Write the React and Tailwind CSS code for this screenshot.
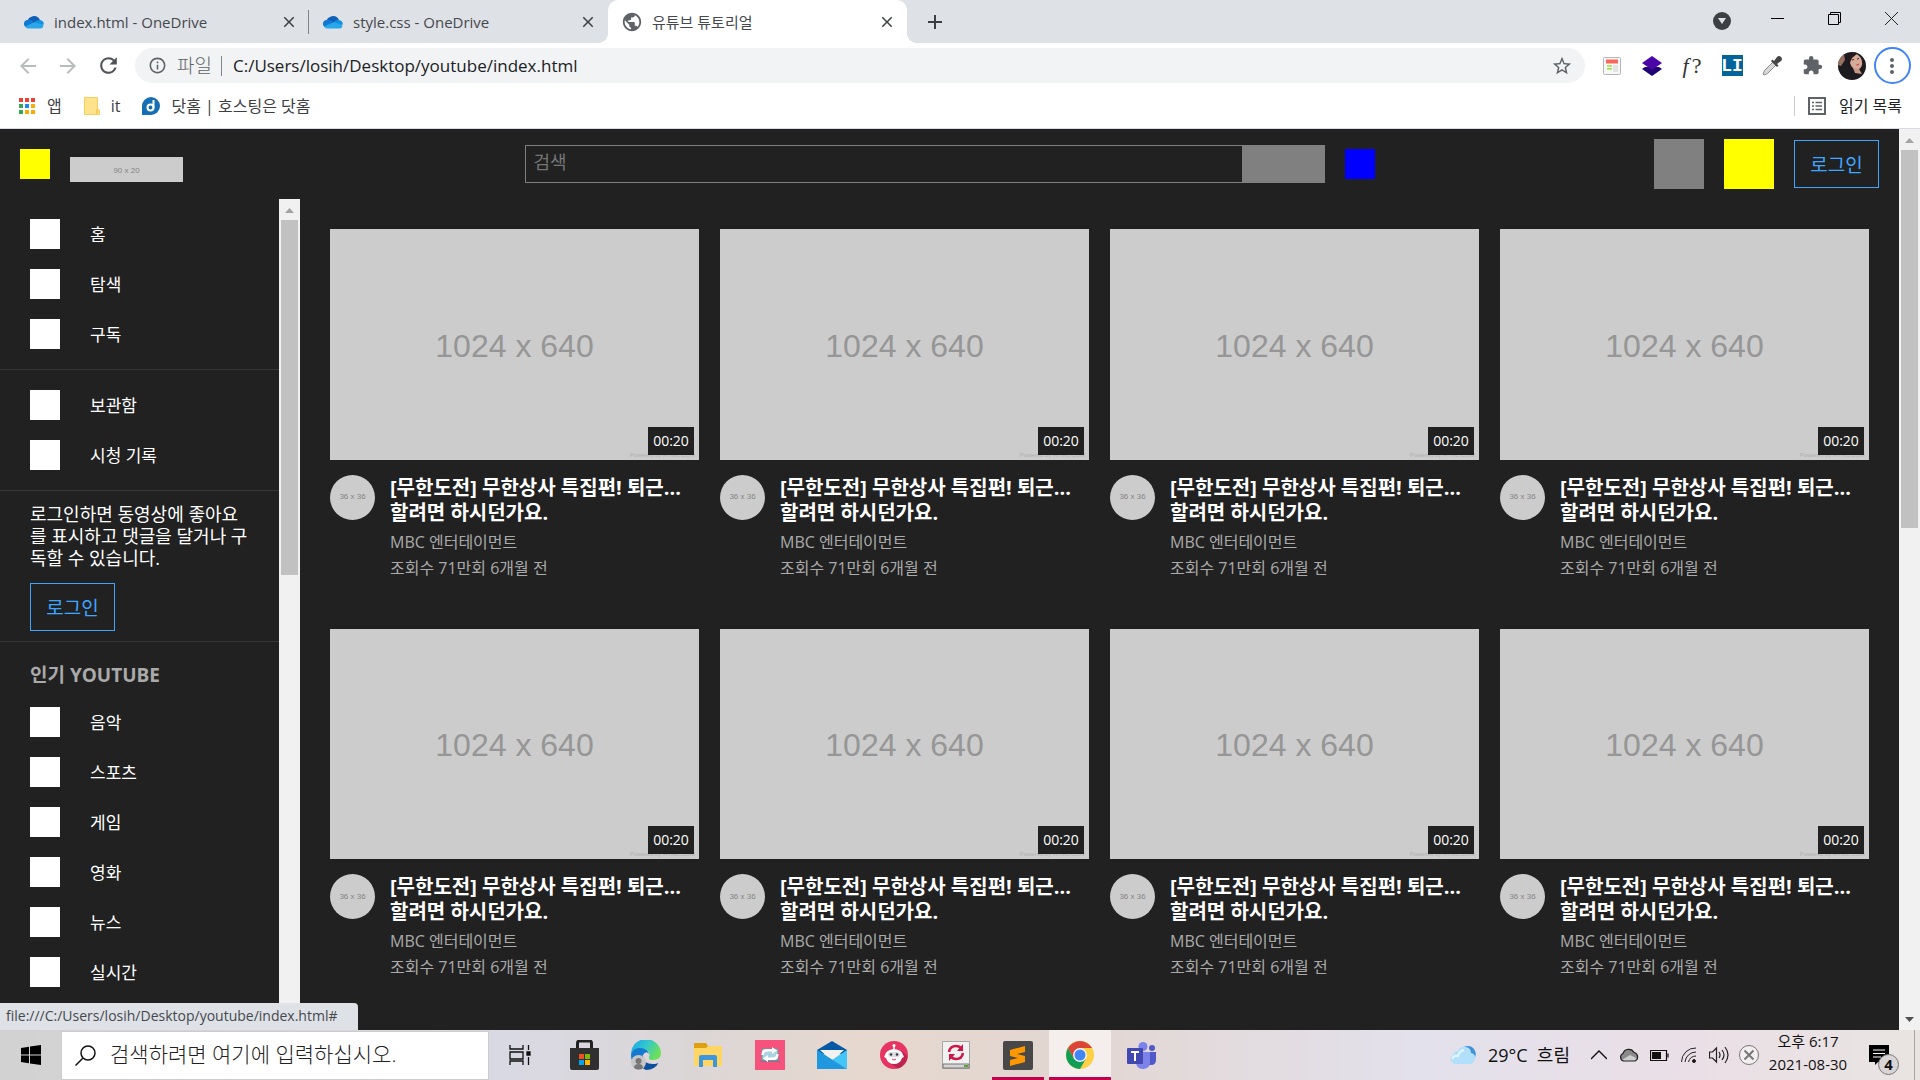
import React from 'react';
import {
  MdAdd,
  MdArrowBack,
  MdArrowForward,
  MdClose,
  MdExtension,
  MdInfoOutline,
  MdMoreVert,
  MdPublic,
  MdRefresh,
  MdStarBorder,
} from 'react-icons/md';

const menuMain = ['홈', '탐색', '구독'];
const menuLibrary = ['보관함', '시청 기록'];
const menuPopular = ['음악', '스포츠', '게임', '영화', '뉴스', '실시간'];
const videos = Array.from({ length: 8 }, (_, index) => ({
  id: index,
  title: ['[무한도전] 무한상사 특집편! 퇴근...', '할려면 하시던가요.'],
  channel: 'MBC 엔터테이먼트',
  meta: '조회수 71만회 6개월 전',
  time: '00:20',
}));

function OneDriveIcon() {
  return (
    <svg width="20" height="14" viewBox="0 0 20 14" aria-hidden="true">
      <path d="M4 9a5 5 0 0 1 3-7 6 6 0 0 1 9 3l-5 5z" fill="#0f5fb8" />
      <path d="M3.500 12.500A3.700 3.700 0 0 1 4 5q2-.5 4 .8L15 12z" fill="#1179d2" />
      <path d="M11 7a5 5 0 0 1 5-2 4 4 0 0 1 3.800 4.500L13 11z" fill="#1490df" />
      <path d="M1 11.500 11 7l8.500 3.500A3.300 3.300 0 0 1 16.500 13.500H4Q2 13.500 1 11.500z" fill="#28a8ea" />
    </svg>
  );
}

function Tab({ title, icon, active, divider }) {
  return (
    <div
      className={`relative flex h-full w-[299px] items-center pr-[11px] pl-[14px] ${
        active
          ? 'rounded-t-[10px] bg-white before:absolute before:bottom-0 before:-left-[10px] before:size-[10px] before:bg-[radial-gradient(circle_at_0_0,transparent_10px,white_10px)] after:absolute after:-right-[10px] after:bottom-0 after:size-[10px] after:bg-[radial-gradient(circle_at_100%_0,transparent_10px,white_10px)]'
          : ''
      }`}
    >
      <span className="flex w-5 shrink-0 justify-center">{icon}</span>
      <span className="ml-[10px] flex-1 truncate text-[15px] leading-5 text-[#45494d]">{title}</span>
      <button aria-label="탭 닫기" className="text-[#3c4043]">
        <MdClose size={18} />
      </button>
      {divider && <span className="absolute top-[10px] right-0 h-6 w-px bg-[#808387]" />}
    </div>
  );
}

function TabStrip() {
  return (
    <div className="flex h-[43px] shrink-0 bg-[#dee1e6] pl-[10px]">
      <Tab title="index.html - OneDrive" icon={<OneDriveIcon />} divider />
      <Tab title="style.css - OneDrive" icon={<OneDriveIcon />} />
      <Tab title="유튜브 튜토리얼" icon={<MdPublic size={22} className="shrink-0 text-[#5f6368]" />} active />
      <button aria-label="새 탭" className="ml-4 text-[#3c4043]">
        <MdAdd size={24} />
      </button>
      <div className="ml-auto flex h-9 items-center">
        <button aria-label="탭 검색" className="mt-[6px] mr-[18px] flex size-[18px] items-center justify-center rounded-full bg-[#3c4043]">
          <svg width="8" height="6" viewBox="0 0 8 6">
            <path d="M0 0h8L4 6z" fill="#dee1e6" />
          </svg>
        </button>
        <button aria-label="최소화" className="flex w-[57px] justify-center">
          <svg width="13" height="13" viewBox="0 0 13 13" stroke="#000">
            <path d="M0 6.500h13" />
          </svg>
        </button>
        <button aria-label="이전 크기로 복원" className="flex w-[57px] justify-center">
          <svg width="13" height="13" viewBox="0 0 13 13" fill="none" stroke="#000">
            <path d="M.5 2.500h10v10H.5zM2.500 2.500v-2h10v10h-2" />
          </svg>
        </button>
        <button aria-label="닫기" className="flex w-[57px] justify-center">
          <svg width="13" height="13" viewBox="0 0 13 13" stroke="#222">
            <path d="M0 0l13 13M13 0L0 13" />
          </svg>
        </button>
      </div>
    </div>
  );
}

function ToolButton({ label, children }) {
  return (
    <button aria-label={label} className="flex h-full w-10 shrink-0 items-center justify-center">
      {children}
    </button>
  );
}

function Toolbar() {
  return (
    <div className="flex h-[45px] shrink-0 items-center bg-white px-2">
      <ToolButton label="뒤로">
        <MdArrowBack size={24} className="text-[#babcbe]" />
      </ToolButton>
      <ToolButton label="앞으로">
        <MdArrowForward size={24} className="text-[#babcbe]" />
      </ToolButton>
      <ToolButton label="새로고침">
        <MdRefresh size={25} className="text-[#505357]" />
      </ToolButton>
      <div className="mx-[7px] flex h-[35px] flex-1 items-center rounded-full bg-[#f1f3f4] pr-3 pl-[13px]">
        <MdInfoOutline size={19} className="text-[#5f6368]" />
        <span className="ml-[10px] text-[19px] leading-6 font-light text-[#5f6368]">파일</span>
        <span className="mr-[11px] ml-[9px] h-5 w-px bg-[#80868b]" />
        <input
          aria-label="주소창"
          defaultValue="C:/Users/losih/Desktop/youtube/index.html"
          className="flex-1 bg-transparent text-[17px] text-[#202124] outline-none"
        />
        <button aria-label="북마크에 추가">
          <MdStarBorder size={22} className="text-[#5f6368]" />
        </button>
      </div>
      <ToolButton label="페이지 편집기">
        <svg width="18" height="18" viewBox="0 0 18 18">
          <rect x=".5" y=".5" width="17" height="17" rx="1" fill="#f7f7f7" stroke="#b5b5b5" />
          <path d="M3 2.500h12v4H3z" fill="#fa665c" />
          <path d="M4 8h5v1.800H4zM4 11h5v1.800H4z" fill="#a4e35c" />
          <path d="M10 8h5v7h-5z" fill="#e4e4e4" />
        </svg>
      </ToolButton>
      <ToolButton label="레이어">
        <svg width="20" height="20" viewBox="0 0 20 20">
          <path d="M0 13l3-2h14l3 2-10 7z" fill="#1f0473" />
          <path d="M10 0l10 7-10 7L0 7z" fill="#4b06a8" />
        </svg>
      </ToolButton>
      <ToolButton label="글꼴 확인">
        <span className="flex gap-[3px] font-['Liberation_Serif',serif] text-[22px] leading-6 text-[#333]">
          <i>f</i>
          <span>?</span>
        </span>
      </ToolButton>
      <ToolButton label="LI">
        <span className="flex size-[21px] items-center justify-center bg-[#03639b] font-['Liberation_Mono',monospace] text-lg leading-none font-bold text-white">
          LI
        </span>
      </ToolButton>
      <ToolButton label="색상 추출">
        <svg width="20" height="20" viewBox="0 0 20 20">
          <path d="M2 19l-1-1 1.500-3.500L11 6l3 3-8.500 8.500z" fill="#d8d8d8" stroke="#8a8a8a" />
          <path d="M9 5l1.500-1.500L12 5l3-4q2-2 4 0t0 4l-4 3 1.500 1.500L15 11z" fill="#444" />
        </svg>
      </ToolButton>
      <ToolButton label="확장 프로그램">
        <MdExtension size={21} className="text-[#5f6368]" />
      </ToolButton>
      <ToolButton label="프로필">
        <svg width="28" height="28" viewBox="0 0 28 28">
          <clipPath id="avatar">
            <circle cx="14" cy="14" r="14" />
          </clipPath>
          <g clipPath="url(#avatar)">
            <path d="M0 0h28v28H0z" fill="#1d1a20" />
            <path d="M0 7l6-5 1 6-4 6-3-1z" fill="#99705e" />
            <ellipse cx="18" cy="10" rx="6" ry="8" transform="rotate(-15 18 10)" fill="#d6aa98" />
            <path d="M15 16l6 1 3 5-7-1z" fill="#c59784" />
            <path d="M10 3q5-4 10-2l-6 5-3 7z" fill="#241a1d" />
            <path d="M14 8l2-.5M19 7l2-.5" stroke="#3a2525" />
            <path d="M17.500 13l4-1.500-1.500 2z" fill="#c5313f" />
          </g>
        </svg>
      </ToolButton>
      <ToolButton label="Chrome 맞춤설정">
        <span className="flex size-[37px] shrink-0 items-center justify-center rounded-full border-2 border-[#4285f4]">
          <MdMoreVert size={24} className="text-[#5f6368]" />
        </span>
      </ToolButton>
    </div>
  );
}

function BookmarkBar() {
  const dots = ['#ea4335', '#ea4335', '#ea4335', '#34a853', '#1a8cf0', '#fbab05', '#34a853', '#fbab05', '#fbab05'];
  return (
    <div className="flex h-[41px] shrink-0 items-center border-b border-[#d9dbdf] bg-white px-[18px] pb-[5px] text-base text-[#3c4043]">
      <a href="#" className="ml-px flex items-center gap-3">
        <span className="grid grid-cols-3 gap-[2px]">
          {dots.map((color, index) => (
            <span key={index} className="size-1" style={{ backgroundColor: color }} />
          ))}
        </span>
        앱
      </a>
      <a href="#" className="ml-[22px] flex items-center gap-[11px]">
        <svg width="16" height="18" viewBox="0 0 16 18">
          <path d="M.5.500h13v11l2 1.500v4.500H.5z" fill="#ffe38c" stroke="#f6cf5b" />
          <path d="M13 12v5" stroke="#e8b834" />
        </svg>
        it
      </a>
      <a href="#" className="ml-[22px] flex items-center gap-[11px]">
        <svg width="18" height="18" viewBox="0 0 18 18">
          <path d="M0 18V9a9 9 0 1 1 9 9z" fill="#166fb5" />
          <circle cx="8.500" cy="10.500" r="3" fill="none" stroke="#fff" strokeWidth="2" />
          <path d="M11.500 3v8" stroke="#fff" strokeWidth="2" />
        </svg>
        닷홈 | 호스팅은 닷홈
      </a>
      <a href="#" className="ml-auto flex items-center gap-[13px] text-[#202124]">
        <span className="h-5 w-px bg-[#c9cbce]" />
        <svg width="18" height="18" viewBox="0 0 18 18" fill="none" stroke="#5f6368">
          <path d="M1 1h16v16H1z" strokeWidth="2" />
          <path d="M4 5.500h2M4 9h2M4 12.500h2M7.500 5.500H14M7.500 9H14M7.500 12.500H14" strokeWidth="1.500" />
        </svg>
        읽기 목록
      </a>
    </div>
  );
}

function ScrollBar({ thumb }) {
  return (
    <div className="flex w-[21px] shrink-0 flex-col items-center bg-[#f1f1f1]">
      <svg width="21" height="21" viewBox="0 0 21 21" className="shrink-0">
        <path d="M6 14l4.500-5 4.500 5z" fill="#a3a3a3" />
      </svg>
      <div className="min-h-0 w-full flex-1 px-[2px]">
        <div className={`bg-[#c1c1c1] ${thumb}`} />
      </div>
      <svg width="21" height="21" viewBox="0 0 21 21" className="shrink-0">
        <path d="M6 8l4.500 5L15 8z" fill="#505050" />
      </svg>
    </div>
  );
}

function LoginButton() {
  return (
    <button className="h-12 w-[85px] shrink-0 border border-[#3ea6ff] pt-[2px] text-[19px] leading-none text-[#3ea6ff]">로그인</button>
  );
}

function PageHeader() {
  return (
    <header className="grid h-[70px] shrink-0 grid-cols-[1fr_auto_1fr] items-center px-5">
      <div className="flex items-center gap-5">
        <button aria-label="메뉴" className="h-[30px] w-[30px] bg-[#ffff00]" />
        <a href="#" className="mt-[10px] flex h-[25px] w-[113px] items-center justify-center bg-[#ccc] pt-1 font-['Liberation_Sans',sans-serif] text-[8px] text-[#858585]">
          90 x 20
        </a>
      </div>
      <form className="flex items-center" onSubmit={(e) => e.preventDefault()}>
        <input
          aria-label="검색"
          placeholder="검색"
          className="h-[38px] w-[718px] border border-[#808080] bg-transparent px-2 pb-1 text-[18px] text-white outline-none placeholder:text-[#757575]"
        />
        <button aria-label="검색하기" className="h-[38px] w-[82px] bg-[#808080]" />
        <button type="button" aria-label="음성 검색" className="ml-5 h-[30px] w-[30px] bg-[#0000ff]" />
      </form>
      <div className="flex items-center justify-end gap-5">
        <button aria-label="앱" className="size-[50px] bg-[#808080]" />
        <button aria-label="설정" className="size-[50px] bg-[#ffff00]" />
        <LoginButton />
      </div>
    </header>
  );
}

function MenuList({ items }) {
  return (
    <ul>
      {items.map((item) => (
        <li key={item}>
          <a href="#" className="flex h-[50px] items-center gap-[30px] px-[30px] text-[17px] text-white">
            <span className="size-[30px] bg-white" />
            <span className="pt-[2px]">{item}</span>
          </a>
        </li>
      ))}
    </ul>
  );
}

function Sidebar() {
  return (
    <aside className="flex w-[300px] shrink-0 overflow-hidden">
      <div className="min-w-0 flex-1 overflow-hidden">
        <nav className="border-b border-[#373737] py-[10px]">
          <MenuList items={menuMain} />
        </nav>
        <nav className="border-b border-[#373737] py-[10px]">
          <MenuList items={menuLibrary} />
        </nav>
        <section className="border-b border-[#373737] px-[30px] pt-3 pb-[10px]">
          <p className="mb-[14px] text-[18px] leading-[22px] whitespace-nowrap text-white">
            로그인하면 동영상에 좋아요
            <br />를 표시하고 댓글을 달거나 구
            <br />
            독할 수 있습니다.
          </p>
          <LoginButton />
        </section>
        <nav className="pt-5">
          <h2 className="mb-[9px] px-[30px] text-[19px] leading-[26px] font-bold text-[#aaa]">인기 YOUTUBE</h2>
          <MenuList items={menuPopular} />
        </nav>
      </div>
      <ScrollBar thumb="h-[45%]" />
    </aside>
  );
}

function VideoCard({ video }) {
  return (
    <article>
      <a href="#" className="relative flex aspect-[8/5] items-center justify-center bg-[#ccc] pt-[3px] font-['Liberation_Sans',sans-serif] text-[32px] text-[#969696]">
        1024 x 640
        <span className="absolute right-1 bottom-0 text-[6px] leading-[10px] text-[#b0b0b0]">Powered by HTML.COM</span>
        <time className="absolute right-[5px] bottom-[5px] h-7 w-[46px] bg-[#212121] text-center font-['Open_Sans',sans-serif] text-[14px] leading-7 text-white">
          {video.time}
        </time>
      </a>
      <div className="mt-[15px] flex gap-[15px]">
        <div className="flex size-[45px] shrink-0 items-center justify-center rounded-full bg-[#ccc] font-['Liberation_Sans',sans-serif] text-[8px] text-[#858585]">
          36 x 36
        </div>
        <div className="min-w-0 whitespace-nowrap">
          <h3 className="text-xl leading-[25px] font-bold text-white">
            {video.title[0]}
            <br />
            {video.title[1]}
          </h3>
          <p className="mt-1 text-base leading-[26px] text-[#aaa]">{video.channel}</p>
          <p className="text-base leading-[26px] text-[#aaa]">{video.meta}</p>
        </div>
      </div>
    </article>
  );
}

function TaskIcon({ label, className = '', children }) {
  return (
    <button aria-label={label} className={`relative flex h-full w-[62px] items-center justify-center ${className}`}>
      {children}
    </button>
  );
}

function TaskApps() {
  return (
    <div className="flex h-full">
      <TaskIcon label="작업 보기">
        <svg width="22" height="20" viewBox="0 0 22 20" fill="none" stroke="#111" strokeWidth="1.300">
          <path d="M1 0v4h13V0M1 20v-4h13v4M1 7h13v7H1zM19.500 0v5M19.500 12v8" />
          <path d="M18 7h3v3h-3z" fill="#111" />
        </svg>
      </TaskIcon>
      <TaskIcon label="Microsoft Store" className="ml-[2px]">
        <svg width="29" height="30" viewBox="0 0 29 30">
          <path d="M7.500 9V3q0-2 2-2h10q2 0 2 2v6" fill="none" stroke="#222" strokeWidth="3" />
          <path d="M0 8h29v20q0 2-2 2H2q-2 0-2-2z" fill="#303030" />
          <path d="M9 14h5v5H9z" fill="#f25022" />
          <path d="M15 14h5v5h-5z" fill="#7fba00" />
          <path d="M9 20h5v5H9z" fill="#00a4ef" />
          <path d="M15 20h5v5h-5z" fill="#ffb900" />
        </svg>
      </TaskIcon>
      <TaskIcon label="Microsoft Edge">
        <svg width="30" height="30" viewBox="0 0 30 30">
          <defs>
            <linearGradient id="edgeTop" x1="0" y1="0" x2="1" y2=".5">
              <stop offset="0" stopColor="#1ca0e8" />
              <stop offset=".5" stopColor="#32c6d2" />
              <stop offset="1" stopColor="#6be05a" />
            </linearGradient>
          </defs>
          <path d="M0 15A15 15 0 0 1 30 13q0 7-8 7-5 0-4-3 2-5-3-7Q5 7 0 15z" fill="url(#edgeTop)" />
          <path d="M0 15q2-8 10-7 7 1 8 6-3-4-6 1-3 6 3 11-15 1-15-11z" fill="#1479cf" />
          <path d="M12 16q0 8 10 8 5 0 6-2-4 8-13 8-8-3-7-9 1-4 4-5z" fill="#0c4f9e" />
          <circle cx="7.500" cy="22.500" r="7.500" fill="#c6c6c6" />
          <circle cx="7.500" cy="21" r="3" fill="#777" />
          <path d="M3 28q0-4 4.500-4t4.500 4q-4 3-9 0z" fill="#777" />
        </svg>
      </TaskIcon>
      <TaskIcon label="파일 탐색기">
        <svg width="28" height="24" viewBox="0 0 28 24">
          <path d="M0 1q0-1 1-1h11l2 3v4H0z" fill="#e09f0e" />
          <path d="M0 5h12l2-2h13q1 0 1 1v19H0z" fill="#ffd563" />
          <path d="M5 24V14q0-2 2-2h14q2 0 2 2v10h-4v-7H9v7z" fill="#3d96dc" />
        </svg>
      </TaskIcon>
      <TaskIcon label="화면 전환">
        <svg width="30" height="30" viewBox="0 0 30 30">
          <path d="M0 0h30v30H0z" fill="#f6527c" />
          <path d="M7 9h16v11H7z" fill="#a9d3df" stroke="#6d94a5" />
          <path d="M5 21h20v1H5z" fill="#5f8797" />
          <path d="M6.500 15q0-6 5-6H17V7l5 3.500-5 3.500v-2.500h-4q-4 0-4.500 3.500zM23.500 14q0 6-5 6H13v2l-5-3.500 5-3.500v2.500h4q4 0 4.500-3.500z" fill="#fff" />
        </svg>
      </TaskIcon>
      <TaskIcon label="메일">
        <svg width="30" height="28" viewBox="0 0 30 28">
          <path d="M0 9L15 0l15 9v4H0z" fill="#0659a5" />
          <path d="M3 9h24L15 20z" fill="#f2f2f2" />
          <path d="M0 9l18 12L9 28H0z" fill="#2aa7e8" />
          <path d="M30 9v19L15 19z" fill="#42c6f7" />
          <path d="M0 28V9l30 19z" fill="#1f98e0" />
        </svg>
      </TaskIcon>
      <TaskIcon label="도우미">
        <svg width="28" height="28" viewBox="0 0 28 28">
          <circle cx="14" cy="14" r="14" fill="#e73463" />
          <path d="M22 10l5.500 5.500q-1 9-9.500 12l-9-6z" fill="#bd2450" />
          <path d="M14 4v6" stroke="#fff" strokeWidth="1.500" />
          <circle cx="14" cy="4.500" r="1.500" fill="#fff" />
          <path d="M5 14q1-5 9-6 8 1 9 6 2 2-1 3-2 6-8 6t-8-6q-3-1-1-3z" fill="#fff" />
          <rect x="8" y="11" width="12" height="5" rx="2.500" fill="#dcdce2" />
          <circle cx="11" cy="13.500" r="1.200" fill="#333" />
          <circle cx="17" cy="13.500" r="1.200" fill="#333" />
          <path d="M12 18q2 2 4 0" stroke="#e73463" fill="none" />
        </svg>
      </TaskIcon>
      <TaskIcon label="동기화">
        <svg width="28" height="28" viewBox="0 0 28 28">
          <path d="M.5.500h27v27H.5z" fill="#f1f1f1" stroke="#a6a6a6" />
          <path d="M1 23h26v4H1z" fill="#d4d4d4" stroke="#777" />
          <path d="M22 25h4" stroke="#55a630" strokeWidth="2" />
          <path d="M7 11q1-6 7-6 3 0 5 2M21 12q-1 6-7 6-3 0-5-2" fill="none" stroke="#cf1747" strokeWidth="2.500" />
          <path d="M21 3v7h-6zM7 20v-7h6z" fill="#cf1747" />
        </svg>
      </TaskIcon>
      <TaskIcon label="Sublime Text">
        <svg width="30" height="29" viewBox="0 0 30 29">
          <rect width="30" height="29" rx="2" fill="#484848" />
          <path d="M7 9l15-4v6l-8 2 8 2v6L7 25v-6l8-2-8-2z" fill="#ff9800" />
        </svg>
        <span className="absolute inset-x-[5px] bottom-0 h-[3px] bg-[#c2004b]" />
      </TaskIcon>
      <TaskIcon label="Chrome" className="bg-[#f4efed]">
        <svg width="28" height="28" viewBox="0 0 28 28">
          <circle cx="14" cy="14" r="14" fill="#fdd045" />
          <path d="M1.900 7A14 14 0 0 1 26.100 7H14L8 17.500z" fill="#db4437" />
          <path d="M1.900 7A14 14 0 0 0 14 28l6-10.500H8z" fill="#0f9d58" />
          <circle cx="14" cy="14" r="7" fill="#f1f1f1" />
          <circle cx="14" cy="14" r="5.500" fill="#4285f4" />
        </svg>
        <span className="absolute inset-x-0 bottom-0 h-[3px] bg-[#c2004b]" />
      </TaskIcon>
      <TaskIcon label="Microsoft Teams">
        <svg width="30" height="27" viewBox="0 0 30 27">
          <circle cx="25" cy="6" r="3" fill="#5059c9" />
          <path d="M20 10h9v8q0 5-5 5h-4z" fill="#5059c9" />
          <circle cx="16" cy="4.500" r="4.500" fill="#7b83eb" />
          <path d="M9 10h14v10q0 7-7 7t-7-7z" fill="#7b83eb" />
          <rect y="6" width="16" height="16" rx="1" fill="#4149b0" />
          <path d="M4 10h8M8 10v9" stroke="#fff" strokeWidth="2" />
        </svg>
      </TaskIcon>
    </div>
  );
}

function TrayIcon({ label, children }) {
  return (
    <button aria-label={label} className="flex h-full w-[30px] items-center justify-center">
      {children}
    </button>
  );
}

function Tray() {
  return (
    <div className="ml-auto flex h-full items-center text-[#111]">
      <button className="mr-[14px] flex items-center gap-3 text-[18px]">
        <svg width="27" height="19" viewBox="0 0 27 19">
          <path d="M12 4q2-4 7-4t7 5q2 4-1 8z" fill="#3f92d8" />
          <path d="M5 18a5 5 0 0 1-1-9q1-4 5-4 2-5 8-4 5 1 5 6 5 1 4 6-1 5-5 5z" fill="#b2e0fa" />
          <path d="M3 13q2-4 6-3 1-5 6-6" fill="none" stroke="#e3f5ff" strokeWidth="2" />
        </svg>
        29°C&nbsp; 흐림
      </button>
      <TrayIcon label="숨겨진 아이콘 표시">
        <svg width="16" height="10" viewBox="0 0 16 10" fill="none" stroke="#111" strokeWidth="1.400">
          <path d="M0 9l8-8 8 8" />
        </svg>
      </TrayIcon>
      <TrayIcon label="OneDrive">
        <svg width="20" height="14" viewBox="0 0 20 14">
          <path d="M4.500 13A4 4 0 0 1 4 5.500a6 6 0 0 1 11-1 4.500 4.500 0 0 1 1 8.500z" fill="#8b8b8b" />
          <path d="M3 12l8-5 8 4-3 2H5z" fill="#cfcfcf" />
          <path d="M4.500 13A4 4 0 0 1 4 5.500a6 6 0 0 1 11-1 4.500 4.500 0 0 1 1 8.500z" fill="none" stroke="#222" strokeWidth="1.200" />
        </svg>
      </TrayIcon>
      <TrayIcon label="배터리">
        <svg width="19" height="11" viewBox="0 0 19 11">
          <path d="M.5.500h16v10H.5zM18 3.500v4" fill="none" stroke="#111" strokeWidth="1.200" />
          <path d="M2 2h9v7H2z" fill="#111" />
        </svg>
      </TrayIcon>
      <TrayIcon label="네트워크">
        <svg width="16" height="16" viewBox="0 0 16 16" fill="none" stroke="#222">
          <path d="M.5 15A14 14 0 0 1 15 1M4 15A11 11 0 0 1 15 5M7.500 15A8 8 0 0 1 15 9" />
          <circle cx="13" cy="14" r="1.500" fill="#111" />
        </svg>
      </TrayIcon>
      <TrayIcon label="볼륨">
        <svg width="21" height="18" viewBox="0 0 21 18" fill="none" stroke="#222" strokeWidth="1.200">
          <path d="M.5 6h3l4-4v14l-4-4h-3zM10 6q2 3 0 6M13 4q4 5 0 10M16 1q6 8 0 16" />
        </svg>
      </TrayIcon>
      <TrayIcon label="장치 오류">
        <svg width="20" height="20" viewBox="0 0 20 20" fill="none" stroke="#777">
          <circle cx="10" cy="10" r="9.500" fill="#f3eff1" />
          <path d="M5.500 5.500l9 9M14.500 5.500l-9 9" strokeWidth="2" />
        </svg>
      </TrayIcon>
      <div className="w-[88px] pb-1 text-center text-[15px] leading-[23px] whitespace-nowrap">
        오후 6:17
        <br />
        2021-08-30
      </div>
      <button aria-label="알림 4개" className="relative flex h-full w-[62px] pt-[15px] pl-[17px]">
        <svg width="20" height="20" viewBox="0 0 20 20">
          <path d="M0 0h20v17H9l-3 3v-3H0z" fill="#000" />
          <path d="M4 5h12M4 8.500h12M4 12h8" stroke="#fff" />
        </svg>
        <span className="absolute top-6 left-[26px] flex size-[21px] items-center justify-center rounded-full border border-[#777] bg-[#d9d5d6] text-[15px] leading-none font-bold">
          4
        </span>
      </button>
      <button aria-label="바탕 화면 보기" className="h-full w-[6px] border-l border-[#a9a5a6]" />
    </div>
  );
}

function TaskBar() {
  return (
    <footer className="flex h-[50px] shrink-0 items-center bg-[linear-gradient(90deg,#d2d2d2_0%,#d3d3d5_5%,#d9d9e4_26%,#dbd6d6_36%,#e6d8ce_45%,#e2d6d2_56%,#e3e1ec_74%,#eadfe6_88%,#e9e4e2_100%)]">
      <button aria-label="시작" className="flex h-full w-[61px] shrink-0 items-center justify-center">
        <svg width="20" height="20" viewBox="0 0 20 20">
          <path d="M0 3l8-1.200v7.700H0zM9 1.600L20 0v9.500H9zM0 10.500h8v7.700L0 17zM9 10.500h11V20L9 18.400z" />
        </svg>
      </button>
      <label className="flex h-[49px] w-[428px] shrink-0 items-center border border-[#ccc] bg-white pl-[13px]">
        <svg width="21" height="21" viewBox="0 0 21 21" fill="none" stroke="#111" strokeWidth="1.500">
          <circle cx="13" cy="8" r="7" />
          <path d="M8 13l-7.500 7.500" />
        </svg>
        <input
          aria-label="Windows 검색"
          placeholder="검색하려면 여기에 입력하십시오."
          className="ml-[14px] flex-1 bg-transparent text-[21px] font-light outline-none placeholder:text-[#222]"
        />
      </label>
      <TaskApps />
      <Tray />
    </footer>
  );
}

export default function App() {
  return (
    <div className="flex h-screen flex-col overflow-hidden bg-[#212121] font-['Open_Sans','Noto_Sans_CJK_KR',sans-serif]">
      <TabStrip />
      <Toolbar />
      <BookmarkBar />
      <div className="relative flex min-h-0 flex-1">
        <div className="flex min-w-0 flex-1 flex-col">
          <PageHeader />
          <div className="flex min-h-0 flex-1">
            <Sidebar />
            <main className="grid min-w-0 flex-1 grid-cols-4 content-start gap-x-[21px] gap-y-12 overflow-hidden p-[30px]">
              {videos.map((video) => (
                <VideoCard key={video.id} video={video} />
              ))}
            </main>
          </div>
        </div>
        <ScrollBar thumb="h-[44%]" />
        <div className="absolute bottom-0 left-0 h-[27px] w-[358px] rounded-tr-[4px] bg-[#dee1e6] pl-[6px] text-[14px] leading-[26px] text-[#45494d]">
          file:///C:/Users/losih/Desktop/youtube/index.html#
        </div>
      </div>
      <TaskBar />
    </div>
  );
}
